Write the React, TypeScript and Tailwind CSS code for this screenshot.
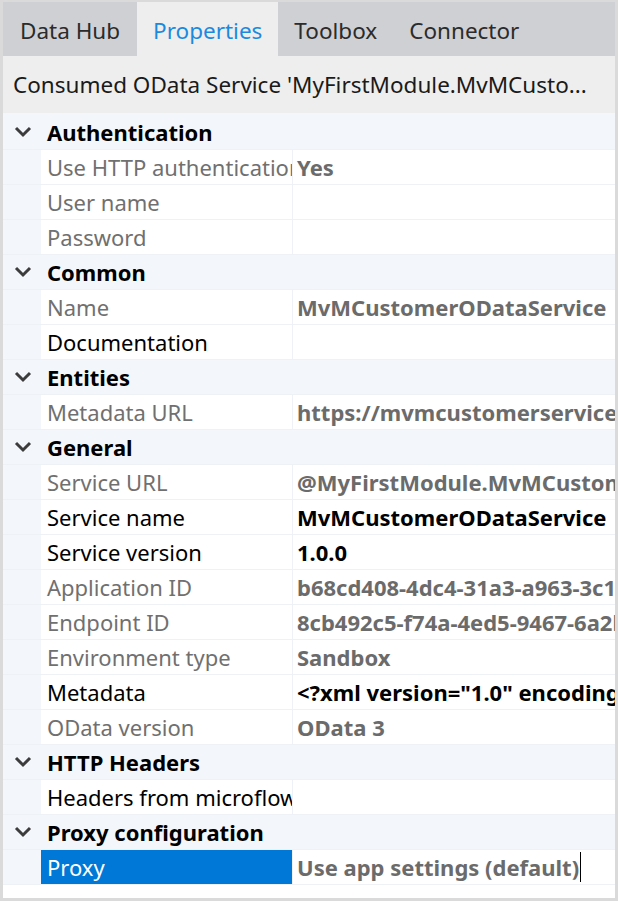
import React from 'react';

type Row = { label: string; value?: string; labelDim?: boolean; valueDim?: boolean; selected?: boolean };
type Section = { title: string; rows: Row[] };

const sections: Section[] = [
  {
    title: 'Authentication',
    rows: [
      { label: 'Use HTTP authentication', value: 'Yes', labelDim: true, valueDim: true },
      { label: 'User name', labelDim: true },
      { label: 'Password', labelDim: true },
    ],
  },
  {
    title: 'Common',
    rows: [
      { label: 'Name', value: 'MvMCustomerODataService', labelDim: true, valueDim: true },
      { label: 'Documentation' },
    ],
  },
  {
    title: 'Entities',
    rows: [{ label: 'Metadata URL', value: 'https://mvmcustomerservice.mendixcloud.com', labelDim: true, valueDim: true }],
  },
  {
    title: 'General',
    rows: [
      { label: 'Service URL', value: '@MyFirstModule.MvMCustomerODataService_Location', labelDim: true, valueDim: true },
      { label: 'Service name', value: 'MvMCustomerODataService' },
      { label: 'Service version', value: '1.0.0' },
      { label: 'Application ID', value: 'b68cd408-4dc4-31a3-a963-3c1d2e0f9a7b', labelDim: true, valueDim: true },
      { label: 'Endpoint ID', value: '8cb492c5-f74a-4ed5-9467-6a2b1c3d4e5f', labelDim: true, valueDim: true },
      { label: 'Environment type', value: 'Sandbox', labelDim: true, valueDim: true },
      { label: 'Metadata', value: '<?xml version="1.0" encoding="utf-8"?>' },
      { label: 'OData version', value: 'OData 3', labelDim: true, valueDim: true },
    ],
  },
  {
    title: 'HTTP Headers',
    rows: [{ label: 'Headers from microflow' }],
  },
  {
    title: 'Proxy configuration',
    rows: [{ label: 'Proxy', value: 'Use app settings (default)', valueDim: true, selected: true }],
  },
];

function Chevron() {
  return (
    <svg width="18" height="12" viewBox="0 0 18 12" className="shrink-0">
      <path d="M2 2 L9 9 L16 2" fill="none" stroke="#3c3c3c" strokeWidth="3" />
    </svg>
  );
}

export default function App() {
  return (
    <div
      className="w-[618px] h-[901px] bg-[#dadada] pt-[2px] pl-[3px] pr-[3px] pb-[3px] overflow-hidden"
      style={{ fontFamily: '"Noto Sans", "Open Sans", sans-serif' }}
    >
      <div className="flex flex-col h-full bg-white">
        {/* Tabs */}
        <div className="flex h-[54px] bg-[#cfd0d4] text-[22.5px] text-[#2b2b2b] shrink-0 whitespace-nowrap">
          <div className="flex items-center px-[17px] pt-[3px]">Data Hub</div>
          <div className="flex items-center px-[16px] pt-[3px] bg-[#eeeeee] text-[#1a8ae0]">Properties</div>
          <div className="flex items-center px-[16px] pt-[3px]">Toolbox</div>
          <div className="flex items-center px-[16px] pt-[3px]">Connector</div>
        </div>

        {/* Title */}
        <div className="flex items-center h-[57px] bg-[#eeeeee] px-[10px] text-[22.5px] text-[#1a1a1a] whitespace-nowrap overflow-hidden shrink-0">
          Consumed OData Service 'MyFirstModule.MvMCusto...
        </div>

        {/* Property grid */}
        <div className="flex flex-col text-[22px] leading-none pt-[2px] bg-[#f3f6fa]">
          {sections.map((s) => (
            <div key={s.title} className="flex flex-col bg-[#f3f6fa]">
              <div className="flex items-center h-[35px] border-b border-[#eef1f5]">
                <div className="w-[38px] flex justify-center pl-[2px]">
                  <Chevron />
                </div>
                <span className="font-bold text-black pl-[6px]">{s.title}</span>
              </div>
              {s.rows.map((r) => (
                <div key={r.label} className="flex h-[35px] pl-[38px] border-b border-[#eef1f5]">
                  <div
                    className={`w-[251px] shrink-0 flex items-center pl-[6px] overflow-hidden whitespace-nowrap ${
                      r.selected ? 'bg-[#0078d7] text-white' : r.labelDim ? 'bg-white text-[#707070]' : 'bg-white text-black'
                    }`}
                  >
                    {r.label}
                  </div>
                  <div className="w-[1px] bg-[#eef1f8] shrink-0" />
                  <div
                    className={`flex-1 flex items-center bg-white pl-[4px] font-bold overflow-hidden whitespace-nowrap ${
                      r.valueDim ? 'text-[#6b6b6b]' : 'text-black'
                    }`}
                  >
                    {r.value}
                    {r.selected && <span className="inline-block w-[1px] h-[30px] bg-black ml-[1px]" />}
                  </div>
                </div>
              ))}
            </div>
          ))}
        </div>
      </div>
    </div>
  );
}
